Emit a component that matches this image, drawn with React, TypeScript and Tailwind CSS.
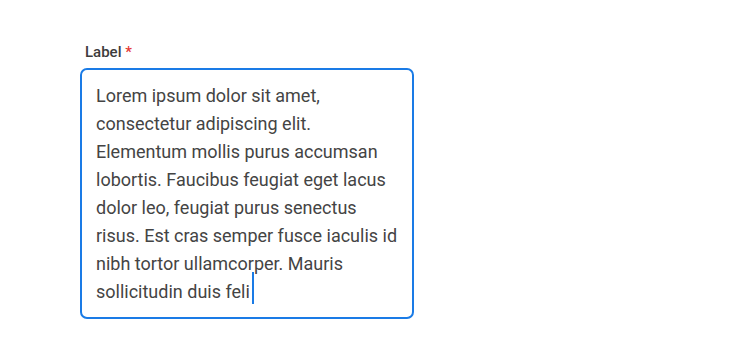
import React from "react";

export default function App() {
  return (
    <div className="min-h-[360px] w-[740px] bg-white font-['Roboto',sans-serif]">
      <div className="pl-[80px] pt-[42px]">
        <label className="block pl-[5px] text-[15px] leading-[20px] font-medium text-[#3c3c3c]">
          Label <span className="text-[#e53935]">*</span>
        </label>
        <div className="mt-[6px] h-[251px] w-[334px] rounded-[7px] border-2 border-[#1a7be6] px-[14px] pt-[12px]">
          <p className="text-[18px] leading-[28px] text-[#444444]">
            Lorem ipsum dolor sit amet, consectetur adipiscing elit. Elementum mollis purus accumsan lobortis. Faucibus feugiat eget lacus dolor leo, feugiat purus senectus risus. Est cras semper fusce iaculis id nibh tortor ullamcorper. Mauris sollicitudin duis{" "}
            <span className="relative whitespace-nowrap">
              feli
              <span className="absolute -right-[4px] top-[-9px] h-[32px] w-[2px] bg-[#1a7be6]" />
            </span>
          </p>
        </div>
      </div>
    </div>
  );
}
